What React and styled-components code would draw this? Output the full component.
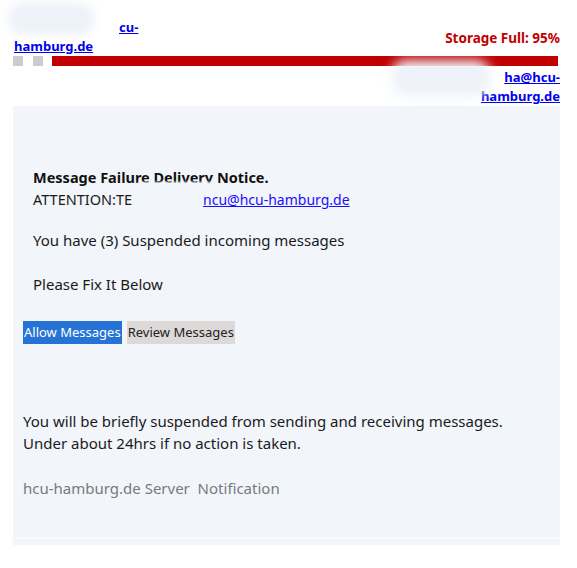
import React from "react";
import styled, { createGlobalStyle } from "styled-components";

const Global = createGlobalStyle`
  body {
    margin: 0;
    background: #fff;
    font-family: "Noto Sans", "Open Sans", sans-serif;
  }
`;

const Page = styled.div`
  width: 577px;
  padding: 0 0 20px 0;
  position: relative;
`;

const Header = styled.div`
  display: flex;
  align-items: center;
  justify-content: space-between;
  padding: 18px 17px 0 14px;
`;

const HeadLink = styled.a`
  display: block;
  font-size: 13px;
  font-weight: 700;
  line-height: 19px;
  color: #0000ee;
  text-decoration: underline;
  text-align: ${(p) => (p.right ? "right" : "left")};
`;

const Hidden = styled.span`
  display: inline-block;
  width: ${(p) => p.w}px;
`;

const Storage = styled.div`
  color: #c00000;
  font-size: 13.5px;
  font-weight: 700;
  margin-top: 1px;
`;

const BarRow = styled.div`
  display: flex;
  align-items: stretch;
  padding: 0 19px 0 13px;
  height: 10px;
`;

const Square = styled.div`
  width: 10px;
  margin-right: ${(p) => p.gap}px;
  background: #cccccc;
`;

const Bar = styled.div`
  flex: 1;
  background: #c00000;
`;

const RightAddr = styled.div`
  padding: 2px 17px 0 0;
`;

/* smudges laid over the redacted parts of the screenshot */
const Blur = styled.div`
  position: absolute;
  background: ${(p) => p.bg || "#eef2f9"};
  filter: blur(${(p) => p.soft || 4}px);
  border-radius: 14px;
  left: ${(p) => p.x}px;
  top: ${(p) => p.y}px;
  width: ${(p) => p.w}px;
  height: ${(p) => p.h}px;
`;

const Panel = styled.div`
  margin: 0 17px 0 13px;
  background: #f2f5fa;
  padding: 61px 0 39px 0;
  border-bottom: 1px solid #ffffff;
  box-shadow: 0 6px 0 #f2f5fa;
  color: #1a1a1a;
`;

const Inner = styled.div`
  padding-left: 20px;
`;

const Title = styled.div`
  font-size: 14.5px;
  font-weight: 700;
  line-height: 20px;
  color: #111;
`;

const Attention = styled.div`
  font-size: 14.5px;
  line-height: 22px;
  margin-top: 1px;
`;

const MailLink = styled.a`
  font-size: 14px;
  color: #1a0dff;
  text-decoration: underline;
`;

const Text = styled.p`
  margin: ${(p) => p.mt || 0}px 0 0 0;
  font-size: 15px;
  line-height: 22px;
`;

const Buttons = styled.div`
  display: flex;
  gap: 5px;
  margin: 26px 0 0 -10px;
`;

const Btn = styled.span`
  font-size: 13px;
  line-height: 23px;
  padding: 0 1px;
  background: ${(p) => (p.primary ? "#2673d5" : "#dcd9d8")};
  color: ${(p) => (p.primary ? "#ffffff" : "#222")};
`;

const Notice = styled.div`
  margin-top: 66px;
  padding-left: 10px;
`;

const Footer = styled.p`
  margin: 23px 0 0 0;
  font-size: 15px;
  line-height: 22px;
  color: #777a80;
`;

export default function App() {
  return (
    <Page>
      <Global />
      <Header>
        <HeadLink href="#">
          <Hidden w={105} />
          cu-
          <br />
          hamburg.de
        </HeadLink>
        <Storage>Storage Full: 95%</Storage>
      </Header>
      <BarRow>
        <Square gap={10} />
        <Square gap={9} />
        <Bar />
      </BarRow>
      <RightAddr>
        <HeadLink href="#" right>
          <Hidden w={20} />
          ha@hcu-
          <br />
          hamburg.de
        </HeadLink>
      </RightAddr>
      <Panel>
        <Inner>
          <Title>Message Failure Delivery Notice.</Title>
          <Attention>
            ATTENTION:TE<Hidden w={71} />
            <MailLink href="#">ncu@hcu-hamburg.de</MailLink>
          </Attention>
          <Text mt={18}>You have (3) Suspended incoming messages</Text>
          <Text mt={22}>Please Fix It Below</Text>
          <Buttons>
            <Btn primary>Allow Messages</Btn>
            <Btn>Review Messages</Btn>
          </Buttons>
        </Inner>
        <Notice>
          <Text>
            You will be briefly suspended from sending and receiving messages.
            <br />
            Under about 24hrs if no action is taken.
          </Text>
          <Footer>hcu-hamburg.de Server&nbsp; Notification</Footer>
        </Notice>
      </Panel>
      <Blur x={8} y={3} w={86} h={32} />
      <Blur x={392} y={60} w={98} h={36} soft={6} />
      <Blur x={137} y={182} w={76} h={6} bg="#f2f5fa" soft={1} />
    </Page>
  );
}
